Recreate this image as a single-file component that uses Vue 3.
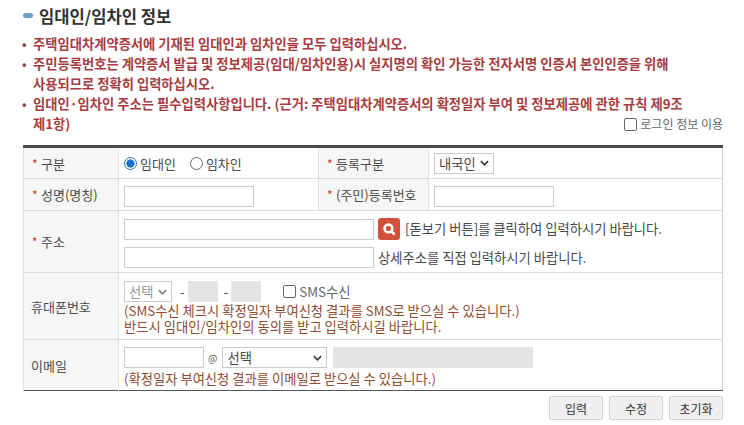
<script setup>
const notes = [
  ['주택임대차계약증서에 기재된 임대인과 임차인을 모두 입력하십시오.'],
  ['주민등록번호는 계약증서 발급 및 정보제공(임대/임차인용)시 실지명의 확인 가능한 전자서명 인증서 본인인증을 위해', '사용되므로 정확히 입력하십시오.'],
  ['임대인·임차인 주소는 필수입력사항입니다. (근거: 주택임대차계약증서의 확정일자 부여 및 정보제공에 관한 규칙 제9조', '제1항)']
]
</script>

<template>
  <div class="page">
    <h2 class="title"><span class="pill"></span>임대인/임차인 정보</h2>
    <ul class="notes">
      <li v-for="(n, i) in notes" :key="i">
        <span class="dot">•</span>
        <div><div v-for="l in n" :key="l">{{ l }}</div></div>
      </li>
    </ul>
    <div class="login-row">
      <label class="check"><span class="box"></span>로그인 정보 이용</label>
    </div>
    <table class="form">
      <colgroup>
        <col class="c1" /><col class="c2" /><col class="c3" /><col />
      </colgroup>
      <tbody>
        <tr class="r1">
          <th><i>*</i>구분</th>
          <td>
            <div class="radios">
              <span class="radio on"></span><span class="rl">임대인</span>
              <span class="radio second"></span><span class="rl">임차인</span>
            </div>
          </td>
          <th><i>*</i>등록구분</th>
          <td>
            <span class="sel s-nat">내국인<svg class="chev" viewBox="0 0 10 6"><path d="M1 1l4 4 4-4" /></svg></span>
          </td>
        </tr>
        <tr class="r2">
          <th><i>*</i>성명(명칭)</th>
          <td><span class="inp w130"></span></td>
          <th><i>*</i>(주민)등록번호</th>
          <td><span class="inp w120"></span></td>
        </tr>
        <tr class="r3">
          <th><i>*</i>주소</th>
          <td colspan="3">
            <div class="addr">
              <span class="inp w250"></span>
              <span class="search">
                <svg viewBox="0 0 14 14"><circle cx="6" cy="6" r="3.6" /><path d="M8.8 8.8l3 3" /></svg>
              </span>
              <span class="hint">[돋보기 버튼]를 클릭하여 입력하시기 바랍니다.</span>
            </div>
            <div class="addr second-line">
              <span class="inp w250"></span>
              <span class="hint h2">상세주소를 직접 입력하시기 바랍니다.</span>
            </div>
          </td>
        </tr>
        <tr class="r4">
          <th class="plain">휴대폰번호</th>
          <td colspan="3">
            <div class="phone">
              <span class="sel s-phone muted">선택<svg class="chev" viewBox="0 0 10 6"><path d="M1 1l4 4 4-4" /></svg></span>
              <span class="dash">-</span>
              <span class="inp off w30"></span>
              <span class="dash">-</span>
              <span class="inp off w30"></span>
              <label class="check sms"><span class="box"></span>SMS수신</label>
            </div>
            <div class="brown first">(SMS수신 체크시 확정일자 부여신청 결과를 SMS로 받으실 수 있습니다.)</div>
            <div class="brown">반드시 임대인/임차인의 동의를 받고 입력하시길 바랍니다.</div>
          </td>
        </tr>
        <tr class="r5">
          <th class="plain">이메일</th>
          <td colspan="3">
            <div class="mail">
              <span class="inp w80"></span>
              <span class="at">@</span>
              <span class="sel s-mail">선택<svg class="chev" viewBox="0 0 10 6"><path d="M1 1l4 4 4-4" /></svg></span>
              <span class="inp off w200"></span>
            </div>
            <div class="brown first">(확정일자 부여신청 결과를 이메일로 받으실 수 있습니다.)</div>
          </td>
        </tr>
      </tbody>
    </table>
    <div class="actions">
      <button type="button">입력</button>
      <button type="button">수정</button>
      <button type="button">초기화</button>
    </div>
  </div>
</template>

<style>
html, body { margin: 0; background: #fff; }
</style>

<style scoped>
.page {
  width: 744px;
  height: 425px;
  overflow: hidden;
  box-sizing: border-box;
  padding: 6px 21px 0 23px;
  font-family: "Noto Sans CJK KR", "Noto Sans", sans-serif;
  font-size: 13.3px;
  color: #4a4a4a;
}
.title {
  margin: 0;
  height: 20px;
  line-height: 20px;
  display: flex;
  align-items: center;
  font-size: 16.6px;
  font-weight: 700;
  color: #333;
}
.pill {
  width: 10px;
  height: 5px;
  border-radius: 3px;
  background: #6a9fc8;
  margin-right: 6px;
  margin-top: -2px;
}
.notes {
  list-style: none;
  margin: 8px 0 0;
  padding: 0;
  color: #a83c40;
  font-weight: 700;
  font-size: 13.3px;
  line-height: 20px;
}
.notes li {
  display: flex;
}
.dot {
  width: 10px;
  flex: none;
  margin-left: -1px;
  margin-right: 1px;
  color: #8a4a4a;
  font-size: 12px;
}
.login-row {
  display: flex;
  justify-content: flex-end;
  margin-top: -20px;
  height: 20px;
  line-height: 20px;
}
.check {
  display: inline-flex;
  align-items: center;
  font-size: 12px;
  color: #666;
}
.box {
  width: 13px;
  height: 13px;
  box-sizing: border-box;
  border: 1px solid #666;
  border-radius: 2px;
  margin-right: 3px;
  background: #fff;
}
.form {
  width: 700px;
  margin-top: 11px;
  border-collapse: collapse;
  table-layout: fixed;
  border-top: 3px solid #4a4a4a;
  border-bottom: 1px solid #555;
  border-right: 1px solid #d4d4d4;
}
.c1 { width: 95px; }
.c2 { width: 200px; }
.c3 { width: 110px; }
th, td {
  border-bottom: 1px solid #dcdcdc;
  padding: 0;
  vertical-align: middle;
  font-weight: 400;
  box-sizing: border-box;
}
th {
  background: #f6f6f6;
  border-left: 1px solid #e2e2e2;
  border-right: 1px solid #e2e2e2;
  text-align: left;
  padding-left: 8px;
  color: #4a4a4a;
  font-size: 13px;
}
th.plain { padding-left: 7px; }
th i {
  display: inline-block;
  width: 9px;
  font-style: normal;
  color: #c0392b;
  font-size: 12px;
}
td { padding-left: 5px; }
.r5 th, .r5 td { border-bottom: 0; }
.r1 { height: 32px; }
.r2 { height: 32px; }
.r3 { height: 62px; }
.r4 { height: 67px; }
.r5 { height: 51px; }
.r2 td { vertical-align: top; padding-top: 7px; }
.r3 td { vertical-align: top; padding-top: 7px; }
.r4 td { vertical-align: top; padding-top: 8px; }
.r5 td { vertical-align: top; padding-top: 7px; }
.radios { display: flex; align-items: center; }
.radio {
  width: 11px;
  height: 11px;
  border: 1px solid #666;
  border-radius: 50%;
  background: #fff;
  box-sizing: content-box;
}
.radio.on {
  border-color: #2170c8;
  background: radial-gradient(circle, #1a6fd0 0 3.8px, #fff 4.4px);
}
.radio.second { margin-left: 14px; }
.rl { margin-left: 3px; font-size: 13px; }
.inp {
  display: block;
  box-sizing: border-box;
  height: 21px;
  border: 1px solid #ccc;
  background: #fff;
  flex: none;
}
.inp.off { background: #e4e4e4; border-color: #e4e4e4; }
.w30 { width: 30px; }
.w80 { width: 80px; }
.w120 { width: 120px; }
.w130 { width: 130px; }
.w200 { width: 200px; }
.w250 { width: 250px; }
.sel {
  display: inline-flex;
  align-items: center;
  justify-content: space-between;
  box-sizing: border-box;
  height: 21px;
  border: 1px solid #ccc;
  background: #fff;
  padding: 0 4px;
  color: #4a4a4a;
  flex: none;
  vertical-align: middle;
}
.sel.muted { color: #999; }
.s-nat { width: 60px; }
.s-phone { width: 48px; margin-right: 2px; }
.s-mail { width: 105px; }
.chev {
  width: 9px;
  height: 6px;
  fill: none;
  stroke: #444;
  stroke-width: 2;
}
.muted .chev { stroke: #888; }
.addr { display: flex; align-items: center; }
.second-line { margin-top: 7px; }
.search {
  width: 22px;
  height: 22px;
  flex: none;
  margin-left: 4px;
  border-radius: 3px;
  background: #d0523a;
  display: flex;
  align-items: center;
  justify-content: center;
}
.search svg {
  width: 15px;
  height: 15px;
  fill: none;
  stroke: #fff;
  stroke-width: 2.4;
}
.hint { margin-left: 5px; line-height: 20px; }
.h2 { margin-left: 4px; }
.phone, .mail { display: flex; align-items: center; }
.dash { margin: 0 3px 0 6px; color: #555; }
.sms { margin-left: 22px; font-size: 13.3px; }
.brown { color: #8f4c30; line-height: 16px; }
.r4 .brown.first { margin-top: 1px; }
.r5 .brown.first { margin-top: 3px; }
.at { margin: 0 5px 0 4px; font-size: 10px; color: #555; }
.mail .s-mail + .inp { margin-left: 6px; }
.actions {
  display: flex;
  justify-content: flex-end;
  gap: 6px;
  margin-top: 5px;
}
button {
  width: 54px;
  height: 24px;
  box-sizing: border-box;
  padding: 0;
  border: 1px solid #d4d4d4;
  border-radius: 2px;
  background: #efefef;
  font: 12px "Noto Sans CJK KR", sans-serif;
  color: #333;
}
</style>
